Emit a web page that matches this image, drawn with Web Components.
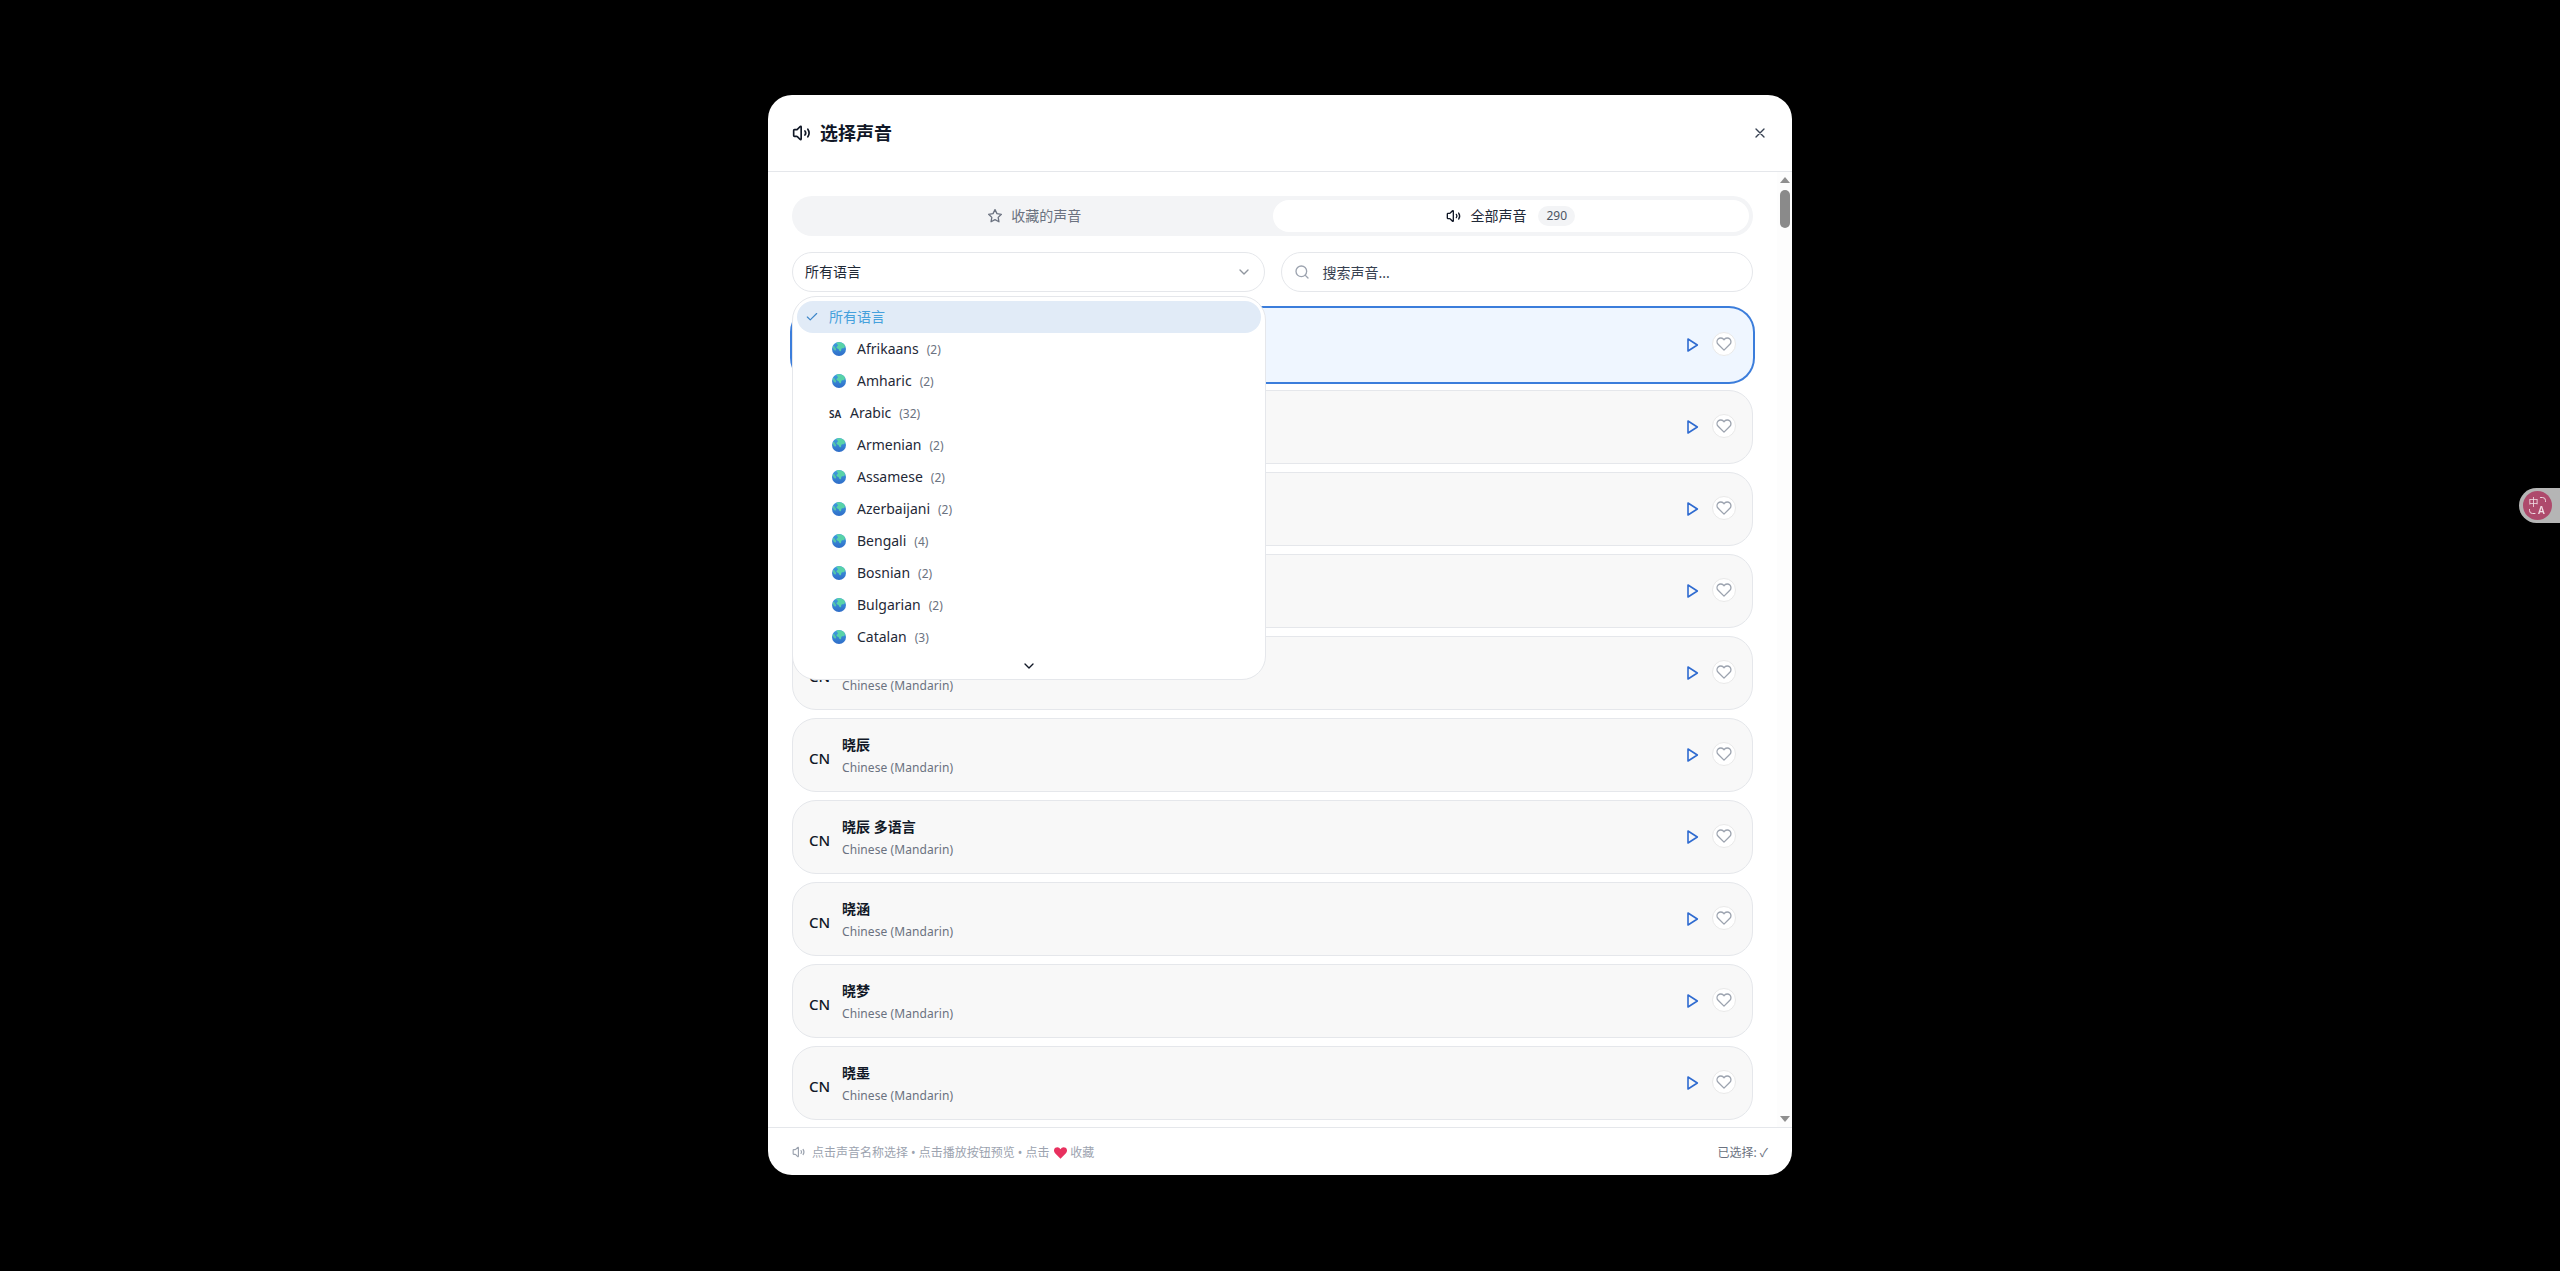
<!DOCTYPE html>
<html lang="zh">
<head>
<meta charset="utf-8">
<title>选择声音</title>
<style>
  html, body { margin: 0; height: 100%; background: #000; }
  body {
    font-family: "Noto Sans", "Noto Sans CJK SC", sans-serif;
    color: #111827;
    display: flex;
    justify-content: center;
    align-items: flex-start;
    padding-top: 95px;
    box-sizing: border-box;
    overflow: hidden;
  }
</style>
</head>
<body>
<voice-modal>
  <modal-header slot="header" label="选择声音"></modal-header>

  <voice-tabs slot="content" count="290"></voice-tabs>

  <filter-row slot="content">
    <lang-select slot="select" value="所有语言">
      <lang-item label="所有语言" selected></lang-item>
      <lang-item label="Afrikaans" count="2"></lang-item>
      <lang-item label="Amharic" count="2"></lang-item>
      <lang-item label="Arabic" count="32" flag="SA"></lang-item>
      <lang-item label="Armenian" count="2"></lang-item>
      <lang-item label="Assamese" count="2"></lang-item>
      <lang-item label="Azerbaijani" count="2"></lang-item>
      <lang-item label="Bengali" count="4"></lang-item>
      <lang-item label="Bosnian" count="2"></lang-item>
      <lang-item label="Bulgarian" count="2"></lang-item>
      <lang-item label="Catalan" count="3"></lang-item>
    </lang-select>
    <search-box slot="search" placeholder="搜索声音..."></search-box>
  </filter-row>

  <voice-list slot="content">
    <voice-card selected></voice-card>
    <voice-card></voice-card>
    <voice-card></voice-card>
    <voice-card></voice-card>
    <voice-card flag="CN" sub="Chinese (Mandarin)"></voice-card>
    <voice-card flag="CN" name="晓辰" sub="Chinese (Mandarin)"></voice-card>
    <voice-card flag="CN" name="晓辰 多语言" sub="Chinese (Mandarin)"></voice-card>
    <voice-card flag="CN" name="晓涵" sub="Chinese (Mandarin)"></voice-card>
    <voice-card flag="CN" name="晓梦" sub="Chinese (Mandarin)"></voice-card>
    <voice-card flag="CN" name="晓墨" sub="Chinese (Mandarin)"></voice-card>
  </voice-list>

  <modal-footer slot="footer"></modal-footer>
</voice-modal>
<translate-widget></translate-widget>

<script>
const speakerIcon = (size, color) => `
  <svg width="${size}" height="${size}" viewBox="0 0 24 24" fill="none" stroke="${color}" stroke-width="2" stroke-linecap="round" stroke-linejoin="round">
    <path d="M11 4.700a.7.7 0 0 0-1.200-.5L6.400 7.600A1.400 1.400 0 0 1 5.400 8H3a1 1 0 0 0-1 1v6a1 1 0 0 0 1 1h2.400a1.400 1.400 0 0 1 1 .4l3.400 3.400a.7.7 0 0 0 1.200-.5z"/>
    <path d="M15.500 9.500a4 4 0 0 1 0 5"/>
    <path d="M19 7.500a8 8 0 0 1 0 9"/>
  </svg>`;

const chevronIcon = (size, color) => `
  <svg width="${size}" height="${size}" viewBox="0 0 24 24" fill="none" stroke="${color}" stroke-width="2" stroke-linecap="round" stroke-linejoin="round">
    <path d="m6 9 6 6 6-6"/>
  </svg>`;

class ModalHeader extends HTMLElement {
    constructor() {
        super();
        this.attachShadow({ mode: 'open' });
    }

    connectedCallback() {
        this.shadowRoot.innerHTML = `
        <style>
          :host { display: flex; align-items: center; height: 76px; padding: 0 24px; border-bottom: 1px solid #e5e7eb; box-sizing: content-box; }
          h2 { margin: 0 0 0 8px; font-size: 18px; font-weight: 700; line-height: 28px; color: #111827; }
          svg { display: block; margin-top: -1px; }
          button { margin-left: auto; width: 16px; height: 16px; padding: 0; border: 0; background: none; display: block; }
        </style>
        ${speakerIcon(20, '#111827')}
        <h2>${this.getAttribute('label')}</h2>
        <button aria-label="close">
          <svg width="16" height="16" viewBox="0 0 24 24" fill="none" stroke="#374151" stroke-width="2" stroke-linecap="round"><path d="M18 6 6 18M6 6l12 12"/></svg>
        </button>`;
    }
}

class VoiceModal extends HTMLElement {
    constructor() {
        super();
        this.attachShadow({ mode: 'open' });
    }

    connectedCallback() {
        this.shadowRoot.innerHTML = `
        <style>
          :host { display: flex; flex-direction: column; width: 1024px; height: 1080px; background: #fff; border-radius: 24px; overflow: hidden; flex: none; }
          .body { flex: 1; min-height: 0; display: flex; }
          .content { flex: 1; min-width: 0; padding: 24px 24px 0; display: flex; flex-direction: column; gap: 16px; overflow: hidden; }
        </style>
        <slot name="header"></slot>
        <div class="body">
          <div class="content"><slot name="content"></slot></div>
          <fake-scrollbar></fake-scrollbar>
        </div>
        <slot name="footer"></slot>`;
    }
}

class FakeScrollbar extends HTMLElement {
    constructor() {
        super();
        this.attachShadow({ mode: 'open' });
    }

    connectedCallback() {
        this.shadowRoot.innerHTML = `
        <style>
          :host { display: flex; flex-direction: column; align-items: center; width: 15px; flex: none; background: #fdfdfd; }
          .up, .down { width: 0; height: 0; border-left: 5px solid transparent; border-right: 5px solid transparent; }
          .up { margin-top: 5px; border-bottom: 6px solid #8f8f8f; }
          .down { margin-top: auto; margin-bottom: 5px; border-top: 6px solid #8f8f8f; }
          .thumb { width: 10px; height: 38px; margin-top: 7px; background: #8a8a8a; border-radius: 5px; }
        </style>
        <div class="up"></div>
        <div class="thumb"></div>
        <div class="down"></div>`;
    }
}

class VoiceTabs extends HTMLElement {
    constructor() {
        super();
        this.attachShadow({ mode: 'open' });
    }

    connectedCallback() {
        this.shadowRoot.innerHTML = `
        <style>
          :host { display: grid; grid-template-columns: 1fr 1fr; height: 40px; padding: 4px; background: #f3f4f6; border-radius: 20px; box-sizing: border-box; font-size: 14px; flex: none; }
          .tab { display: flex; align-items: center; justify-content: center; gap: 8px; border-radius: 16px; color: #6b7280; }
          .tab.on { background: #fff; color: #1f2937; }
          .tab > span { padding-bottom: 2px; }
          svg { display: block; }
          .tab > .badge { margin-left: 4px; height: 20px; padding: 0 8px; background: #f3f4f6; border-radius: 10px; font-size: 12px; line-height: 20px; color: #4b5563; }
        </style>
        <div class="tab">
          <svg width="16" height="16" viewBox="0 0 24 24" fill="none" stroke="#6b7280" stroke-width="2" stroke-linejoin="round"><path d="M12 2.500l2.950 5.980 6.600.96-4.780 4.650 1.130 6.570L12 17.560l-5.900 3.100 1.130-6.570-4.780-4.650 6.600-.96z"/></svg>
          <span>收藏的声音</span>
        </div>
        <div class="tab on">
          ${speakerIcon(16, '#111827')}
          <span>全部声音</span>
          <span class="badge">${this.getAttribute('count')}</span>
        </div>`;
    }
}

class FilterRow extends HTMLElement {
    constructor() {
        super();
        this.attachShadow({ mode: 'open' });
    }

    connectedCallback() {
        this.shadowRoot.innerHTML = `
        <style>
          :host { display: grid; grid-template-columns: 1fr 1fr; gap: 16px; position: relative; z-index: 5; flex: none; }
        </style>
        <slot name="select"></slot>
        <slot name="search"></slot>`;
    }
}

class LangSelect extends HTMLElement {
    constructor() {
        super();
        this.attachShadow({ mode: 'open' });
    }

    connectedCallback() {
        this.shadowRoot.innerHTML = `
        <style>
          :host { display: block; position: relative; font-size: 14px; }
          .trigger { display: flex; align-items: center; justify-content: space-between; height: 40px; padding: 0 12px; box-sizing: border-box; border: 1px solid #e5e7eb; border-radius: 20px; background: #fff; color: #1f2937; }
          .trigger span { padding-bottom: 2px; }
          .trigger svg { display: block; opacity: .55; }
          .menu { position: absolute; top: 44px; left: 0; width: 474px; height: 384px; box-sizing: border-box; padding: 4px; background: #fff; border: 1px solid #e5e7eb; border-radius: 24px; display: flex; flex-direction: column; }
          .items { display: flex; flex-direction: column; flex: none; }
          .more { flex: 1; display: flex; align-items: center; justify-content: center; }
          .more svg { display: block; margin-top: 4px; }
        </style>
        <div class="trigger">
          <span>${this.getAttribute('value')}</span>
          ${chevronIcon(16, '#374151')}
        </div>
        <div class="menu">
          <div class="items"><slot></slot></div>
          <div class="more">${chevronIcon(16, '#111827')}</div>
        </div>`;
    }
}

class LangItem extends HTMLElement {
    constructor() {
        super();
        this.attachShadow({ mode: 'open' });
    }

    getLead() {
        if (this.hasAttribute('selected')) return '';
        const flag = this.getAttribute('flag');
        if (flag) return `<span class="flag">${flag}</span>`;
        return `
        <svg class="globe" width="20" height="14" viewBox="-3 0 20 14">
          <defs>
            <linearGradient id="sea" x1="0" y1="0" x2="0" y2="1">
              <stop offset="0" stop-color="#3fa0e0"/>
              <stop offset="1" stop-color="#2f6cc8"/>
            </linearGradient>
          </defs>
          <circle cx="7" cy="7" r="7" fill="url(#sea)"/>
          <path d="M5 .6C7.500-.2 11 .4 12.600 3c.6 1 .4 2.400-.5 3-1 .6-1.600 0-2.400.6-.8.7-.1 2-1 2.600-.9.5-1.600-.6-1.900-1.600-.3-.9-1.400-.8-2-1.500-.7-.8-.1-1.800.7-2.200C6.300 3.400 6.100 2.300 5 2.200 4.300 2 4.600 1 5 .6z" fill="#58d2a8"/>
          <path d="M1 4.200c.9-.3 1.700.3 2 1.100.3.9 1.300 1.300 1.200 2.300-.1.800-.8 1.100-1.500.8C1.500 7.900.7 6.200 1 4.200z" fill="#52c4ac"/>
        </svg>`;
    }

    connectedCallback() {
        const selected = this.hasAttribute('selected');
        const count = this.getAttribute('count');
        this.shadowRoot.innerHTML = `
        <style>
          :host { display: flex; align-items: center; gap: 8px; height: 32px; padding-left: 32px; position: relative; border-radius: 16px; font-size: 14px; color: #1f2937; }
          :host([selected]) { background: #e1ebf7; color: #45a0dc; }
          .check { position: absolute; left: 8px; top: 9px; display: block; }
          .globe { display: block; flex: none; }
          .flag { font-size: 10px; width: 13px; flex: none; font-weight: 600; padding-top: 1px; }
          .label { padding-bottom: 2px; }
          .count { font-size: 12px; color: #6b7280; }
        </style>
        ${selected ? '<svg class="check" width="14" height="14" viewBox="0 0 24 24" fill="none" stroke="#3d86c9" stroke-width="2" stroke-linecap="round" stroke-linejoin="round"><path d="M20 6 9 17l-5-5"/></svg>' : ''}
        ${this.getLead()}
        <span class="label">${this.getAttribute('label')}</span>
        ${count ? `<span class="count">(${count})</span>` : ''}`;
    }
}

class SearchBox extends HTMLElement {
    constructor() {
        super();
        this.attachShadow({ mode: 'open' });
    }

    connectedCallback() {
        this.shadowRoot.innerHTML = `
        <style>
          :host { display: flex; align-items: center; gap: 13px; height: 40px; padding: 0 12px; box-sizing: border-box; border: 1px solid #e5e7eb; border-radius: 20px; background: #fff; font-size: 14px; color: #374151; }
          svg { display: block; flex: none; }
          span { padding-bottom: 1px; }
        </style>
        <svg width="16" height="16" viewBox="0 0 24 24" fill="none" stroke="#9ca3af" stroke-width="2" stroke-linecap="round"><circle cx="11" cy="11" r="8"/><path d="m21 21-4.300-4.300"/></svg>
        <span>${this.getAttribute('placeholder')}</span>`;
    }
}

class VoiceList extends HTMLElement {
    constructor() {
        super();
        this.attachShadow({ mode: 'open' });
    }

    connectedCallback() {
        this.shadowRoot.innerHTML = `
        <style>
          :host { display: flex; flex-direction: column; gap: 8px; flex: none; }
        </style>
        <slot></slot>`;
    }
}

class VoiceCard extends HTMLElement {
    constructor() {
        super();
        this.attachShadow({ mode: 'open' });
    }

    connectedCallback() {
        const flag = this.getAttribute('flag');
        const name = this.getAttribute('name');
        const sub = this.getAttribute('sub');
        this.shadowRoot.innerHTML = `
        <style>
          :host { display: flex; align-items: center; height: 74px; padding: 0 16px; box-sizing: border-box; background: #f8f8f8; border: 1px solid #e5e7eb; border-radius: 24px; flex: none; }
          :host([selected]) { background: #eff6ff; border: 0 solid transparent; box-shadow: 0 0 0 2px #3b7ddb; padding: 0 17px; }
          .flag { width: 21px; margin-right: 12px; font-size: 15px; font-weight: 500; padding-top: 5px; color: #111827; line-height: 20px; flex: none; }
          .text { display: flex; flex-direction: column; min-width: 0; }
          .name { font-size: 14px; font-weight: 700; line-height: 20px; color: #111827; height: 20px; }
          .sub { font-size: 12px; line-height: 16px; margin-top: 5px; color: #6b7280; letter-spacing: .08px; }
          .actions { margin-left: auto; display: flex; align-items: center; gap: 12px; }
          .play { display: block; }
          .heart { width: 24px; height: 24px; margin-top: -2px; box-sizing: border-box; border: 1px solid #e9e9e9; border-radius: 50%; background: #fff; display: flex; align-items: center; justify-content: center; }
          .heart svg { display: block; }
        </style>
        <div class="flag">${flag || ''}</div>
        <div class="text">
          <div class="name">${name || ''}</div>
          <div class="sub">${sub || ''}</div>
        </div>
        <div class="actions">
          <svg class="play" width="16" height="16" viewBox="0 0 24 24" fill="none" stroke="#2f6bd0" stroke-width="2.400" stroke-linejoin="round"><path d="M6 3l14 9-14 9z"/></svg>
          <div class="heart">
            <svg width="16" height="16" viewBox="0 0 24 24" fill="none" stroke="#9ca3af" stroke-width="2" stroke-linejoin="round"><path d="M20.800 4.600a5.500 5.500 0 0 0-7.800 0L12 5.700l-1-1.100a5.500 5.500 0 0 0-7.800 7.800L12 21.200l8.800-8.800a5.500 5.500 0 0 0 0-7.800z"/></svg>
          </div>
        </div>`;
    }
}

class ModalFooter extends HTMLElement {
    constructor() {
        super();
        this.attachShadow({ mode: 'open' });
    }

    connectedCallback() {
        this.shadowRoot.innerHTML = `
        <style>
          :host { display: flex; align-items: center; height: 47px; padding: 0 24px; border-top: 1px solid #e5e7eb; font-size: 12px; color: #9ca3af; flex: none; }
          .left { display: flex; align-items: center; gap: 6px; }
          svg { display: block; }
          .heart { display: inline-block; vertical-align: -2px; margin: 0 .5px 0 1px; }
          .right { margin-left: auto; color: #6b7280; }
        </style>
        <div class="left">
          ${speakerIcon(14, '#9ca3af')}
          <span>点击声音名称选择 • 点击播放按钮预览 • 点击 <svg class="heart" width="13" height="12" viewBox="0 0 24 22"><path d="M12 21.500 2 11.500C-1 8-.5 3.500 2.500 1.500 6-.8 10 .5 12 4c2-3.500 6-4.800 9.500-2.500 3 2 3.500 6.500.5 10z" fill="#e8315f"/></svg> 收藏</span>
        </div>
        <div class="right">已选择: ✓</div>`;
    }
}

class TranslateWidget extends HTMLElement {
    constructor() {
        super();
        this.attachShadow({ mode: 'open' });
    }

    connectedCallback() {
        this.shadowRoot.innerHTML = `
        <style>
          :host { position: fixed; top: 488px; right: 0; width: 41px; height: 35px; box-sizing: border-box; padding: 3px 0 0 4px; background: #b5b5b5; border-radius: 18px 0 0 18px; }
          svg { display: block; }
          text { fill: #f0dce3; font-family: "Noto Sans", "Noto Sans CJK SC", sans-serif; }
        </style>
        <svg width="29" height="29" viewBox="0 0 29 29">
          <circle cx="14.500" cy="14.500" r="14.500" fill="#ae4a6c"/>
          <text x="5.500" y="15" font-size="10">中</text>
          <text x="15" y="23" font-size="10" font-weight="600">A</text>
          <path d="M17.500 6.500h2a3 3 0 0 1 3 3v1M6.500 18.500v1a3 3 0 0 0 3 3H12" fill="none" stroke="#f0dce3" stroke-width="1" stroke-linecap="round"/>
        </svg>`;
    }
}

customElements.define('modal-header', ModalHeader);
customElements.define('fake-scrollbar', FakeScrollbar);
customElements.define('voice-modal', VoiceModal);
customElements.define('voice-tabs', VoiceTabs);
customElements.define('filter-row', FilterRow);
customElements.define('lang-select', LangSelect);
customElements.define('lang-item', LangItem);
customElements.define('search-box', SearchBox);
customElements.define('voice-list', VoiceList);
customElements.define('voice-card', VoiceCard);
customElements.define('modal-footer', ModalFooter);
customElements.define('translate-widget', TranslateWidget);
</script>
</body>
</html>
